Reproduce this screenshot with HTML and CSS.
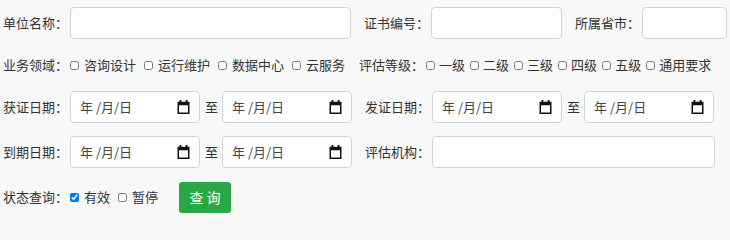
FILE: index.html
```html
<!DOCTYPE html>
<html lang="zh-CN">
<head>
<meta charset="utf-8">
<title>查询</title>
<link rel="stylesheet" href="styles.css">
</head>
<body>
<form class="search">
  <div class="row">
    <div class="group">
      <label class="lbl">单位名称：</label>
      <input class="txt w-unit" type="text">
    </div>
    <div class="group">
      <label class="lbl">证书编号：</label>
      <input class="txt w-cert" type="text">
    </div>
    <div class="group">
      <label class="lbl">所属省市：</label>
      <input class="txt w-city" type="text">
    </div>
  </div>

  <div class="row row-check">
    <div class="group">
      <span class="lbl">业务领域：</span>
      <label class="opt wide"><input type="checkbox" class="cb">咨询设计</label>
      <label class="opt wide"><input type="checkbox" class="cb">运行维护</label>
      <label class="opt wide"><input type="checkbox" class="cb">数据中心</label>
      <label class="opt wide"><input type="checkbox" class="cb">云服务</label>
    </div>
    <div class="group">
      <span class="lbl">评估等级：</span>
      <label class="opt tight"><input type="checkbox" class="cb">一级</label>
      <label class="opt tight"><input type="checkbox" class="cb">二级</label>
      <label class="opt tight"><input type="checkbox" class="cb">三级</label>
      <label class="opt tight"><input type="checkbox" class="cb">四级</label>
      <label class="opt tight"><input type="checkbox" class="cb">五级</label>
      <label class="opt tight"><input type="checkbox" class="cb">通用要求</label>
    </div>
  </div>

  <div class="row">
    <div class="group">
      <span class="lbl">获证日期：</span>
      <div class="date"><span class="date-text">年 /月/日</span><svg class="cal" width="13" height="14" viewBox="0 0 13 14"><rect x="2.5" y="0" width="1.8" height="3"/><rect x="8.7" y="0" width="1.8" height="3"/><path fill-rule="evenodd" d="M0.5 1.8h12v12.2h-12z M2 5.2v7.3h9V5.2z"/></svg></div>
      <span class="to">至</span>
      <div class="date"><span class="date-text">年 /月/日</span><svg class="cal" width="13" height="14" viewBox="0 0 13 14"><rect x="2.5" y="0" width="1.8" height="3"/><rect x="8.7" y="0" width="1.8" height="3"/><path fill-rule="evenodd" d="M0.5 1.8h12v12.2h-12z M2 5.2v7.3h9V5.2z"/></svg></div>
    </div>
    <div class="group">
      <span class="lbl">发证日期：</span>
      <div class="date"><span class="date-text">年 /月/日</span><svg class="cal" width="13" height="14" viewBox="0 0 13 14"><rect x="2.5" y="0" width="1.8" height="3"/><rect x="8.7" y="0" width="1.8" height="3"/><path fill-rule="evenodd" d="M0.5 1.8h12v12.2h-12z M2 5.2v7.3h9V5.2z"/></svg></div>
      <span class="to">至</span>
      <div class="date"><span class="date-text">年 /月/日</span><svg class="cal" width="13" height="14" viewBox="0 0 13 14"><rect x="2.5" y="0" width="1.8" height="3"/><rect x="8.7" y="0" width="1.8" height="3"/><path fill-rule="evenodd" d="M0.5 1.8h12v12.2h-12z M2 5.2v7.3h9V5.2z"/></svg></div>
    </div>
  </div>

  <div class="row">
    <div class="group">
      <span class="lbl">到期日期：</span>
      <div class="date"><span class="date-text">年 /月/日</span><svg class="cal" width="13" height="14" viewBox="0 0 13 14"><rect x="2.5" y="0" width="1.8" height="3"/><rect x="8.7" y="0" width="1.8" height="3"/><path fill-rule="evenodd" d="M0.5 1.8h12v12.2h-12z M2 5.2v7.3h9V5.2z"/></svg></div>
      <span class="to">至</span>
      <div class="date"><span class="date-text">年 /月/日</span><svg class="cal" width="13" height="14" viewBox="0 0 13 14"><rect x="2.5" y="0" width="1.8" height="3"/><rect x="8.7" y="0" width="1.8" height="3"/><path fill-rule="evenodd" d="M0.5 1.8h12v12.2h-12z M2 5.2v7.3h9V5.2z"/></svg></div>
    </div>
    <div class="group">
      <label class="lbl">评估机构：</label>
      <input class="txt w-org" type="text">
    </div>
  </div>

  <div class="row">
    <div class="group">
      <span class="lbl">状态查询：</span>
      <label class="opt wide"><input type="checkbox" class="cb" checked>有效</label>
      <label class="opt"><input type="checkbox" class="cb">暂停</label>
    </div>
    <button type="button" class="btn">查 询</button>
  </div>
</form>
</body>
</html>
```

FILE: styles.css
```css
html, body {
  margin: 0;
  padding: 0;
  background: #f8f8f8;
}
body {
  padding: 7px 0 0 3px;
  font-family: "Noto Sans CJK SC", "Microsoft YaHei", sans-serif;
  font-size: 13px;
  line-height: 18px;
  color: #333;
}
.search {
  margin: 0;
}
.row {
  display: flex;
  align-items: center;
  height: 32px;
  margin-bottom: 13px;
  white-space: nowrap;
}
.row-check {
  height: 26px;
}
.group {
  display: flex;
  align-items: center;
  margin-right: 13px;
}
.lbl {
  width: 65px;
  margin-right: 2px;
  flex: none;
}
.txt {
  box-sizing: border-box;
  height: 32px;
  border: 1px solid #ced4da;
  border-radius: 4px;
  background: #fff;
  padding: 0 8px;
  font: inherit;
  outline: none;
  margin: 0;
}
.w-unit { width: 281px; }
.w-cert { width: 131px; }
.w-city { width: 85px; }
.w-org { width: 283px; }
.opt {
  display: flex;
  align-items: center;
}
.opt.wide { margin-right: 8px; }
.opt.tight { margin-right: 5px; }
.opt.wide:last-child { margin-right: 1px; }
.opt.tight:last-child { margin-right: 0; }
.cb {
  width: 9px;
  height: 9px;
  margin: 0 5px 0 0;
  flex: none;
}
.tight .cb {
  margin-right: 4px;
}
.date {
  box-sizing: border-box;
  width: 130px;
  height: 32px;
  border: 1px solid #ced4da;
  border-radius: 4px;
  background: #fff;
  display: flex;
  align-items: center;
  justify-content: space-between;
  padding: 0 9px 0 9px;
}
.date-text {
  color: #444;
}
.cal {
  fill: #111;
  flex: none;
}
.to {
  margin: 0 4px 0 5px;
}
.btn {
  box-sizing: border-box;
  width: 52px;
  height: 31px;
  margin-left: 8px;
  border: none;
  border-radius: 3px;
  background: #28a745;
  color: #fff;
  font-family: inherit;
  font-size: 14px;
  padding: 0;
  cursor: pointer;
}
```
